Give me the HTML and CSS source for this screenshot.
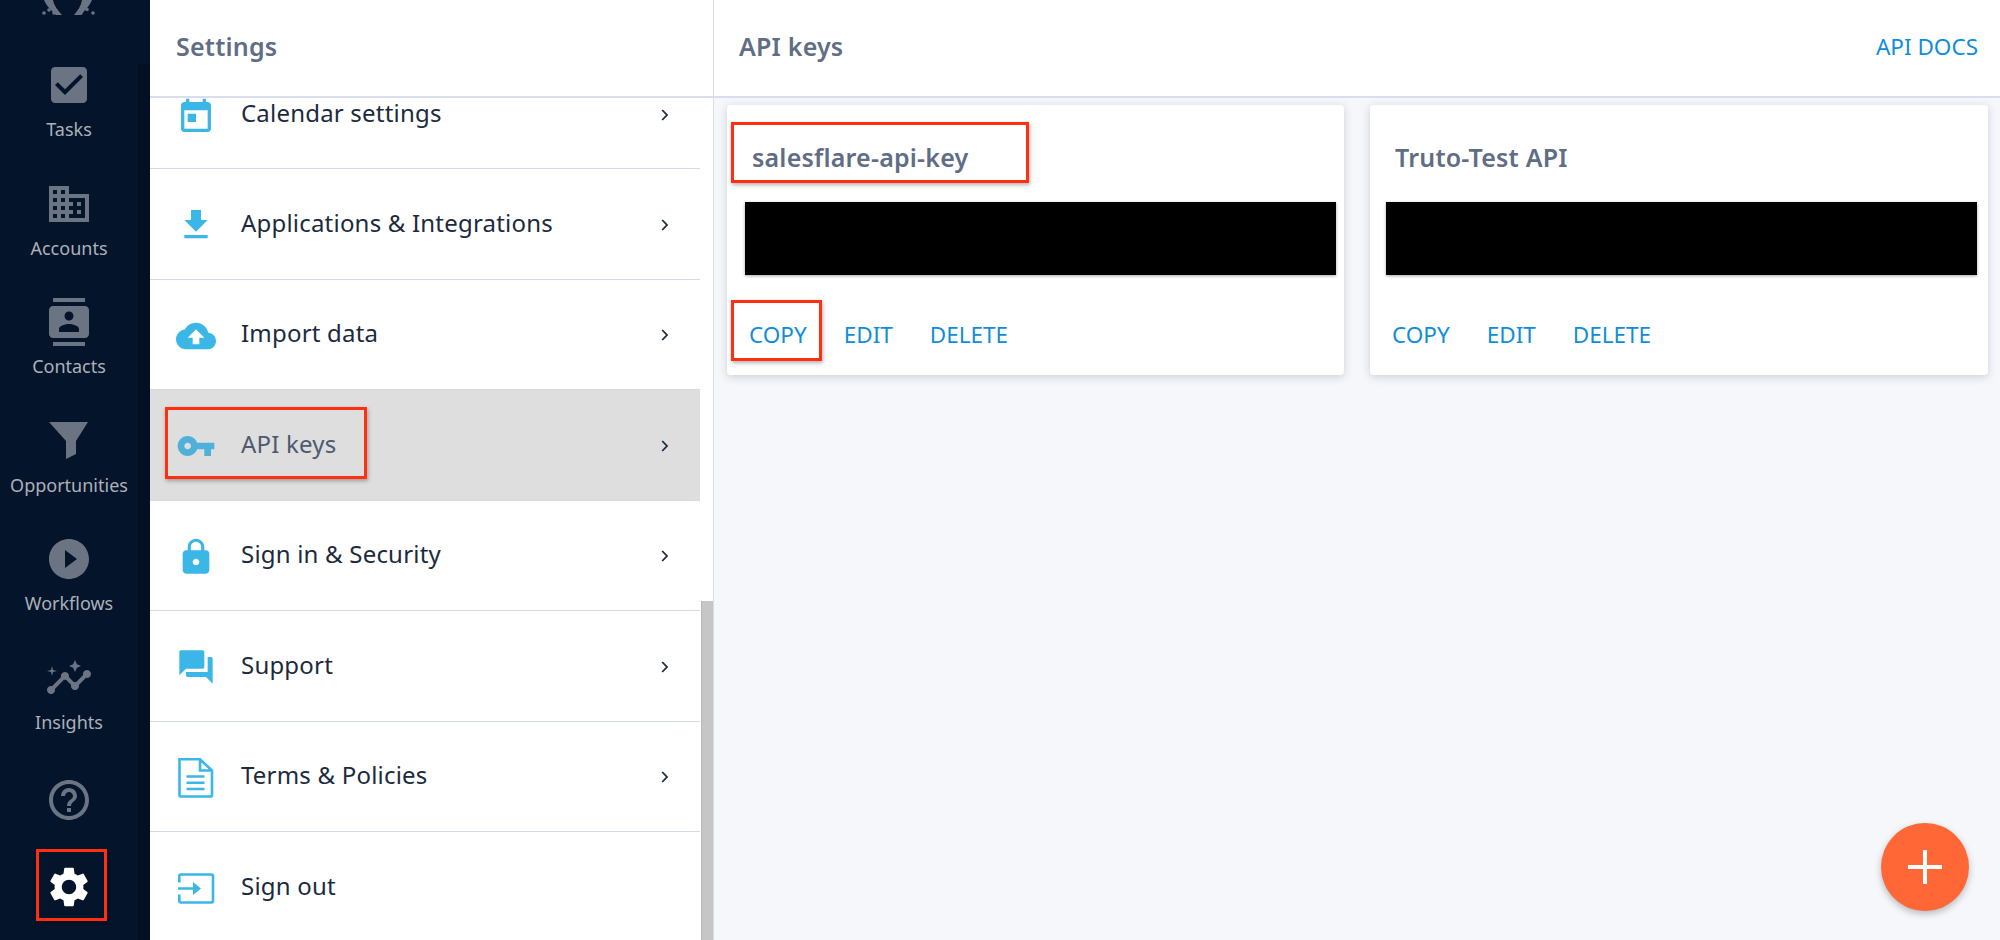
FILE: index.html
```html
<!DOCTYPE html>
<html lang="en">
<head>
<meta charset="utf-8">
<title>Settings - API keys</title>
<link rel="stylesheet" href="styles.css">
</head>
<body>
<div class="app">
  <nav class="rail">
    <div class="rail-logo">
      <svg viewBox="0 0 54 16" width="54" height="16"><g fill="#6b7483"><path d="M2 0h9c1 6 5 10 9 15h-6C10 11 5 7 2 0zM40 0h10c-3 7-8 11-11 15h-7c4-5 7-9 8-15z"/><circle cx="2" cy="13" r="1.800"/><circle cx="7" cy="10" r="1.800"/><circle cx="12" cy="13" r="1.800"/><circle cx="39" cy="13" r="1.800"/><circle cx="45" cy="9.500" r="1.800"/><circle cx="51" cy="13" r="1.800"/></g></svg>
    </div>
    <a class="rail-item"><svg class="rail-icon" viewBox="0 0 24 24"><path d="M19 3H5c-1.100 0-2 .9-2 2v14c0 1.100.9 2 2 2h14c1.100 0 2-.9 2-2V5c0-1.100-.9-2-2-2zm-9 14l-5-5 1.410-1.410L10 14.170l7.590-7.590L19 8l-9 9z"/></svg><span>Tasks</span></a>
    <a class="rail-item"><svg class="rail-icon" viewBox="0 0 24 24"><path d="M12 7V3H2v18h20V7H12zM6 19H4v-2h2v2zm0-4H4v-2h2v2zm0-4H4V9h2v2zm0-4H4V5h2v2zm4 12H8v-2h2v2zm0-4H8v-2h2v2zm0-4H8V9h2v2zm0-4H8V5h2v2zm10 12h-8v-2h2v-2h-2v-2h2v-2h-2V9h8v10zm-2-8h-2v2h2v-2zm0 4h-2v2h2v-2z"/></svg><span>Accounts</span></a>
    <a class="rail-item"><svg class="rail-icon" viewBox="0 0 24 24"><path d="M20 0H4v2h16V0zM4 24h16v-2H4v2zM20 4H4c-1.100 0-2 .9-2 2v12c0 1.100.9 2 2 2h16c1.100 0 2-.9 2-2V6c0-1.100-.9-2-2-2zm-8 2.750c1.240 0 2.250 1.010 2.250 2.250s-1.010 2.250-2.250 2.250S9.750 10.240 9.750 9 10.760 6.750 12 6.750zM17 17H7v-1.500c0-1.670 3.330-2.500 5-2.500s5 .83 5 2.500V17z"/></svg><span>Contacts</span></a>
    <a class="rail-item"><svg class="rail-icon" viewBox="0 0 48 48"><path d="M4 5h39L31 24v13l-10 5V24z"/></svg><span>Opportunities</span></a>
    <a class="rail-item"><svg class="rail-icon" viewBox="0 0 24 24"><path d="M12 2C6.480 2 2 6.480 2 12s4.480 10 10 10 10-4.480 10-10S17.520 2 12 2zm-2 14.500v-9l6 4.500-6 4.500z"/></svg><span>Workflows</span></a>
    <a class="rail-item"><svg class="rail-icon" viewBox="0 0 24 24"><path d="M21 8c-1.450 0-2.260 1.440-1.930 2.510l-3.550 3.560c-.3-.09-.74-.09-1.040 0l-2.550-2.550C12.270 10.450 11.460 9 10 9c-1.450 0-2.270 1.440-1.930 2.520l-4.560 4.550C2.440 15.740 1 16.550 1 18c0 1.100.9 2 2 2 1.450 0 2.260-1.440 1.930-2.510l4.550-4.560c.3.09.74.09 1.040 0l2.550 2.550C12.730 16.550 13.540 18 15 18c1.450 0 2.270-1.440 1.930-2.520l3.560-3.550c1.070.33 2.510-.48 2.510-1.930 0-1.100-.9-2-2-2z"/><path d="M15 9l.94-2.070L18 6l-2.060-.93L15 3l-.92 2.070L12 6l2.080.93zM3.500 11L4 9l2-.5L4 8l-.5-2L3 8l-2 .5L3 9z"/></svg><span>Insights</span></a>
    <a class="rail-tool rail-tool-help"><svg class="rail-icon" viewBox="0 0 24 24"><path d="M11 18h2v-2h-2v2zm1-16C6.480 2 2 6.480 2 12s4.480 10 10 10 10-4.480 10-10S17.520 2 12 2zm0 18c-4.410 0-8-3.590-8-8s3.590-8 8-8 8 3.590 8 8-3.590 8-8 8zm0-14c-2.210 0-4 1.790-4 4h2c0-1.100.9-2 2-2s2 .9 2 2c0 2-3 1.750-3 5h2c0-2.250 3-2.500 3-5 0-2.210-1.790-4-4-4z"/></svg></a>
    <a class="rail-tool rail-tool-active"><svg class="rail-icon" viewBox="0 0 24 24"><path d="M19.140 12.940c.04-.3.06-.61.06-.94 0-.32-.02-.64-.07-.94l2.030-1.580c.18-.14.23-.41.12-.61l-1.920-3.320c-.12-.22-.37-.29-.59-.22l-2.390.96c-.5-.38-1.030-.7-1.620-.94l-.36-2.540c-.04-.24-.24-.41-.48-.41h-3.840c-.24 0-.43.17-.47.41l-.36 2.540c-.59.24-1.130.57-1.620.94l-2.390-.96c-.22-.08-.47 0-.59.22L2.740 8.870c-.12.21-.08.47.12.61l2.030 1.580c-.05.3-.09.63-.09.94s.02.64.07.94l-2.030 1.580c-.18.14-.23.41-.12.61l1.920 3.320c.12.22.37.29.59.22l2.390-.96c.5.38 1.030.7 1.620.94l.36 2.540c.05.24.24.41.48.41h3.840c.24 0 .44-.17.47-.41l.36-2.540c.59-.24 1.130-.56 1.620-.94l2.390.96c.22.08.47 0 .59-.22l1.920-3.320c.12-.22.07-.47-.12-.61l-2.010-1.580zM12 15.600c-1.980 0-3.600-1.620-3.600-3.600s1.620-3.600 3.600-3.600 3.600 1.620 3.600 3.600-1.620 3.600-3.600 3.600z"/></svg><i class="mark mark-gear"></i></a>
  </nav>

  <aside class="settings">
    <header class="bar"><h1 class="bar-title">Settings</h1></header>
    <div class="list-wrap">
      <ul class="list">
        <li class="row row-first"><svg class="row-icon row-icon-cal" viewBox="0 0 24 24"><path d="M19 3h-1V1h-2v2H8V1H6v2H5c-1.110 0-1.990.9-1.990 2L3 19c0 1.100.89 2 2 2h14c1.100 0 2-.9 2-2V5c0-1.100-.9-2-2-2zm0 16H5V8h14v11zM7 10h5v5H7z"/></svg><span class="row-label">Calendar settings</span><svg class="chev" viewBox="0 0 8 12"><path d="M1.200 1l4.800 5-4.800 5"/></svg></li>
        <li class="row"><svg class="row-icon" viewBox="0 0 24 24"><path d="M19 9h-4V3H9v6H5l7 7 7-7zM5 18v2h14v-2H5z"/></svg><span class="row-label">Applications &amp; Integrations</span><svg class="chev" viewBox="0 0 8 12"><path d="M1.200 1l4.800 5-4.800 5"/></svg></li>
        <li class="row"><svg class="row-icon" viewBox="0 0 24 24"><path d="M19.350 10.040C18.670 6.590 15.640 4 12 4 9.110 4 6.600 5.640 5.350 8.040 2.340 8.360 0 10.910 0 14c0 3.310 2.690 6 6 6h13c2.760 0 5-2.240 5-5 0-2.640-2.050-4.780-4.650-4.960zM14 13v4h-4v-4H7l5-5 5 5h-3z"/></svg><span class="row-label">Import data</span><svg class="chev" viewBox="0 0 8 12"><path d="M1.200 1l4.800 5-4.800 5"/></svg></li>
        <li class="row row-selected"><svg class="row-icon" viewBox="0 0 24 24"><path d="M12.650 10C11.830 7.670 9.610 6 7 6c-3.310 0-6 2.690-6 6s2.690 6 6 6c2.610 0 4.830-1.670 5.650-4H17v4h4v-4h2v-4H12.650zM7 14c-1.100 0-2-.9-2-2s.9-2 2-2 2 .9 2 2-.9 2-2 2z"/></svg><span class="row-label">API keys</span><svg class="chev" viewBox="0 0 8 12"><path d="M1.200 1l4.800 5-4.800 5"/></svg><i class="mark mark-row"></i></li>
        <li class="row"><svg class="row-icon" viewBox="0 0 24 24"><path d="M18 8h-1V6c0-2.760-2.240-5-5-5S7 3.240 7 6v2H6c-1.100 0-2 .9-2 2v10c0 1.100.9 2 2 2h12c1.100 0 2-.9 2-2V10c0-1.100-.9-2-2-2zm-6 9c-1.100 0-2-.9-2-2s.9-2 2-2 2 .9 2 2-.9 2-2 2zm3.100-9H8.900V6c0-1.710 1.390-3.100 3.100-3.100 1.710 0 3.100 1.390 3.100 3.100v2z"/></svg><span class="row-label">Sign in &amp; Security</span><svg class="chev" viewBox="0 0 8 12"><path d="M1.200 1l4.800 5-4.800 5"/></svg></li>
        <li class="row"><svg class="row-icon" viewBox="0 0 24 24"><path d="M21 6h-2v9H6v2c0 .55.45 1 1 1h11l4 4V7c0-.55-.45-1-1-1zm-4 6V3c0-.55-.45-1-1-1H3c-.55 0-1 .45-1 1v14l4-4h10c.55 0 1-.45 1-1z"/></svg><span class="row-label">Support</span><svg class="chev" viewBox="0 0 8 12"><path d="M1.200 1l4.800 5-4.800 5"/></svg></li>
        <li class="row"><svg class="row-icon row-icon-line" viewBox="0 0 40 40"><path d="M3.500 1.300H24L36 12.500V37.500a1 1 0 0 1-1 1H4.500a1 1 0 0 1-1-1zM24 1.300V12.500H36M10.500 18.500H28.500M10.500 24.800H28.500M10.500 31H28.500"/></svg><span class="row-label">Terms &amp; Policies</span><svg class="chev" viewBox="0 0 8 12"><path d="M1.200 1l4.800 5-4.800 5"/></svg></li>
        <li class="row row-last"><svg class="row-icon row-icon-line" viewBox="0 0 40 40"><path d="M3.300 14.500V8A1.500 1.500 0 0 1 4.800 6.500H35.500A1.500 1.500 0 0 1 37 8V33A1.500 1.500 0 0 1 35.500 34.500H4.800A1.500 1.500 0 0 1 3.300 33V26.500M2 20.500H18"/><path class="row-icon-solid" d="M17 14l8 6.500-8 6.500z"/></svg><span class="row-label">Sign out</span></li>
      </ul>
      <div class="scroll-thumb"></div>
    </div>
  </aside>

  <main class="main">
    <header class="bar bar-main">
      <h2 class="bar-title">API keys</h2>
      <a class="link">API DOCS</a>
    </header>
    <section class="cards">
      <article class="card">
        <h3 class="card-title">salesflare-api-key</h3>
        <div class="redacted"></div>
        <div class="actions"><a class="link">COPY</a><a class="link">EDIT</a><a class="link">DELETE</a></div>
        <i class="mark mark-title"></i>
        <i class="mark mark-copy"></i>
      </article>
      <article class="card card-alt">
        <h3 class="card-title">Truto-Test API</h3>
        <div class="redacted"></div>
        <div class="actions"><a class="link">COPY</a><a class="link">EDIT</a><a class="link">DELETE</a></div>
      </article>
    </section>
    <button class="fab" aria-label="Add"><svg viewBox="0 0 34 34" width="34" height="34"><path d="M15 0h4v15h15v4H19v15h-4V19H0v-4h15z"/></svg></button>
  </main>
</div>
</body>
</html>
```
FILE: styles.css
```css
* { box-sizing: border-box; }
html, body { margin: 0; height: 100%; overflow: hidden; }
body { font-family: "Noto Sans", "Open Sans", sans-serif; color: #1c2a3e; }
ul { list-style: none; margin: 0; padding: 0; }
h1, h2, h3 { margin: 0; }

.app { display: flex; width: 2000px; height: 940px; }

/* icon rail */
.rail { position: relative; width: 150px; flex: none; background: #04142b; display: flex; flex-direction: column; align-items: center; padding-right: 12px; color: #acb1b9; }
.rail::after { content: ""; position: absolute; left: 138px; right: 0; top: 64px; bottom: 0; background: rgba(0,0,0,.16); }
.rail-logo { height: 52px; width: 100%; padding-left: 42px; }
.rail-logo svg { display: block; }
.rail-item { height: 118.6px; display: flex; flex-direction: column; align-items: center; font-size: 18px; line-height: 24px; white-space: nowrap; }
.rail-icon { display: block; width: 48px; height: 48px; fill: #6b7483; flex: none; }
.rail-item .rail-icon { margin-top: 9px; }
.rail-item span { margin-top: 8px; }
.rail-tool { position: relative; height: 87px; width: 100%; display: flex; align-items: center; justify-content: center; }
.rail-tool-help { margin-top: -7px; }
.rail-tool-active .rail-icon { fill: #fff; }

/* red annotation boxes */
.mark { position: absolute; display: block; border: 3px solid #ff2f0f; box-shadow: 1px 2px 4px rgba(0,0,0,.3); pointer-events: none; z-index: 2; }
.mark-gear { left: 36px; top: 5px; width: 71px; height: 72px; }
.mark-row { left: 15px; top: 17px; width: 202px; height: 72px; }
.mark-title { left: 4px; top: 17px; width: 298px; height: 61px; }
.mark-copy { left: 4px; top: 195px; width: 91px; height: 61px; }

/* settings column */
.settings { width: 564px; flex: none; background: #fff; border-right: 1px solid #d9dde6; display: flex; flex-direction: column; }
.bar { height: 98px; flex: none; background: #fff; border-bottom: 2px solid #d8deeb; display: flex; align-items: center; padding: 0 0 4px 26px; }
.bar-title { font-size: 25px; font-weight: 600; letter-spacing: .2px; color: #5f6d85; }
.list-wrap { position: relative; flex: 1; }
.list { width: 550px; }
.row { position: relative; height: 110.5px; display: flex; align-items: center; padding: 0 31px 0 26px; border-bottom: 1.5px solid #d5daea; font-size: 24px; letter-spacing: .2px; }
.row-first { height: 71px; padding-bottom: 38px; }
.row-last { height: 108px; padding-top: 1px; border-bottom: 0; }
.row-icon { width: 40px; height: 40px; fill: #3ab7e6; flex: none; margin-top: 3px; }
.row-icon-cal { margin-top: 5px; }
.row-icon-line { fill: none; stroke: #3ab7e6; stroke-width: 2.6; }
.row-icon-solid { fill: #3ab7e6; stroke: none; }
.row-label { margin: -2px 0 0 25px; flex: 1; line-height: 26px; white-space: nowrap; }
.chev { width: 8px; height: 12px; fill: none; stroke: #1c2a3e; stroke-width: 1.8; flex: none; margin-top: 2px; }
.row-selected { background: #dedede; color: #4d5a70; }
.row-selected .row-icon { fill: #4fb0d9; }
.scroll-thumb { position: absolute; left: 551px; right: 0; top: 503px; bottom: 0; background: #c6c6c6; border-left: 1px solid #b9b9b9; }

/* main */
.main { position: relative; flex: 1; background: #f5f7fa; display: flex; flex-direction: column; }
.bar-main { justify-content: space-between; padding: 0 22px 4px 25px; }
.link { color: #0f8ddb; font-size: 22.5px; white-space: nowrap; }
.cards { display: flex; gap: 26px; padding: 7px 12px 0 13px; }
.card { position: relative; flex: 1; height: 270px; background: #fff; border-radius: 4px; box-shadow: 0 2px 8px rgba(60,70,90,.22); padding: 0 8px 0 18px; }
.card-alt { padding: 0 11px 0 16px; }
.card-title { height: 97px; display: flex; align-items: center; padding: 7px 0 0 7px; font-size: 25px; font-weight: 600; letter-spacing: .2px; color: #5f6d85; }
.card-alt .card-title { padding-left: 9px; }
.redacted { height: 73px; background: #000; box-shadow: 0 1px 3px rgba(0,0,0,.35); }
.actions { display: flex; gap: 37px; padding: 46px 0 0 4px; line-height: 28px; }
.card-alt .actions { padding-left: 6px; }

.fab { position: absolute; left: 1167px; top: 823px; width: 88px; height: 88px; border: 0; border-radius: 50%; background: #ff6736; box-shadow: 0 3px 7px rgba(0,0,0,.25); display: flex; align-items: center; justify-content: center; padding: 0; }
.fab svg { fill: #fff; }
```
